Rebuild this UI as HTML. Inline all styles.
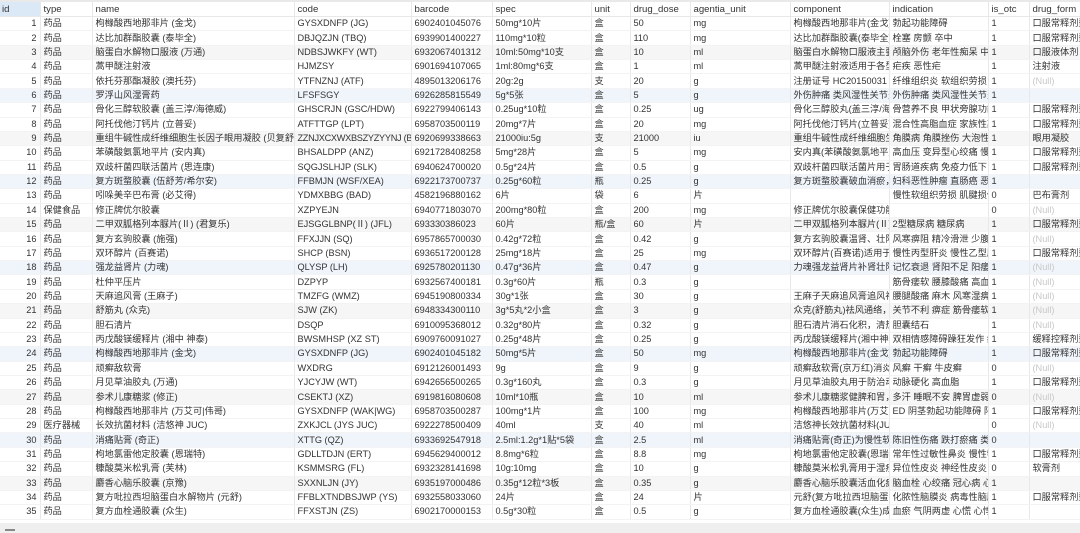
<!DOCTYPE html>
<html><head><meta charset="utf-8">
<style>
html,body{margin:0;padding:0;background:#fff;width:1080px;height:533px;overflow:hidden}
body{font-family:"Liberation Sans","Noto Sans CJK SC",sans-serif;font-size:9.2px;color:#333}
.top{position:absolute;left:0;top:0;width:1080px;height:2px;background:#e9e9e9}
table{position:absolute;left:0;top:2px;border-collapse:collapse;table-layout:fixed;width:1080px}
td,th{height:14.37px;padding:0 0 0 3px;border-right:1px solid #e8e8e8;border-bottom:1px solid #f3f3f3;white-space:nowrap;overflow:hidden;text-align:left;font-weight:normal;line-height:13px;box-sizing:border-box}
th{height:14.5px;background:#fff;border-bottom:1px solid #e8e8e8;font-size:9.6px}
th.sel{background:#dbe8f6}
td:first-child{text-align:right;padding:0 3px 0 0}
tr.b td{background:#f0f5fb}
tr.g td{background:#f6f6f6}
.n{color:#c8c8c8}
.bot{position:absolute;left:0;top:523px;width:1080px;height:10px;background:#efefef}
.ic{position:absolute;left:5px;top:529px;width:10px;height:2px;background:#888}
</style></head><body>
<div class="top"></div>
<table>
<colgroup><col style="width:40px"><col style="width:52px"><col style="width:202px"><col style="width:117px"><col style="width:81px"><col style="width:99px"><col style="width:39px"><col style="width:60px"><col style="width:100px"><col style="width:99px"><col style="width:99px"><col style="width:41px"><col style="width:51px"></colgroup>
<tr><th class="sel" style="text-align:left;padding-left:2px">id</th><th>type</th><th>name</th><th>code</th><th>barcode</th><th>spec</th><th>unit</th><th>drug_dose</th><th>agentia_unit</th><th>component</th><th>indication</th><th>is_otc</th><th>drug_form</th></tr>
<tr><td>1</td><td>药品</td><td>枸橼酸西地那非片 (金戈)</td><td>GYSXDNFP (JG)</td><td>6902401045076</td><td>50mg*10片</td><td>盒</td><td>50</td><td>mg</td><td>枸橼酸西地那非片(金戈)适用</td><td>勃起功能障碍</td><td>1</td><td>口服常释剂型</td></tr>
<tr><td>2</td><td>药品</td><td>达比加群酯胶囊 (泰毕全)</td><td>DBJQZJN (TBQ)</td><td>6939901400227</td><td>110mg*10粒</td><td>盒</td><td>110</td><td>mg</td><td>达比加群酯胶囊(泰毕全)预防</td><td>栓塞 房颤 卒中</td><td>1</td><td>口服常释剂型</td></tr>
<tr class="g"><td>3</td><td>药品</td><td>脑蛋白水解物口服液 (万通)</td><td>NDBSJWKFY (WT)</td><td>6932067401312</td><td>10ml:50mg*10支</td><td>盒</td><td>10</td><td>ml</td><td>脑蛋白水解物口服液主要成分</td><td>颅脑外伤 老年性痴呆 中枢神</td><td>1</td><td>口服液体剂</td></tr>
<tr><td>4</td><td>药品</td><td>蒿甲醚注射液</td><td>HJMZSY</td><td>6901694107065</td><td>1ml:80mg*6支</td><td>盒</td><td>1</td><td>ml</td><td>蒿甲醚注射液适用于各型疟疾</td><td>疟疾 恶性疟</td><td>1</td><td>注射液</td></tr>
<tr><td>5</td><td>药品</td><td>依托芬那酯凝胶 (澳托芬)</td><td>YTFNZNJ (ATF)</td><td>4895013206176</td><td>20g:2g</td><td>支</td><td>20</td><td>g</td><td>注册证号 HC20150031 原注</td><td>纤维组织炎 软组织劳损 运动</td><td>1</td><td class="n">(Null)</td></tr>
<tr class="b"><td>6</td><td>药品</td><td>罗浮山风湿膏药</td><td>LFSFSGY</td><td>6926285815549</td><td>5g*5张</td><td>盒</td><td>5</td><td>g</td><td>外伤肿痛 类风湿性关节炎 风</td><td>外伤肿痛 类风湿性关节炎 风</td><td>1</td><td></td></tr>
<tr><td>7</td><td>药品</td><td>骨化三醇软胶囊 (盖三淳/海德威)</td><td>GHSCRJN (GSC/HDW)</td><td>6922799406143</td><td>0.25ug*10粒</td><td>盒</td><td>0.25</td><td>ug</td><td>骨化三醇胶丸(盖三淳/海德威</td><td>骨营养不良 甲状旁腺功能低</td><td>1</td><td>口服常释剂型</td></tr>
<tr><td>8</td><td>药品</td><td>阿托伐他汀钙片 (立普妥)</td><td>ATFTTGP (LPT)</td><td>6958703500119</td><td>20mg*7片</td><td>盒</td><td>20</td><td>mg</td><td>阿托伐他汀钙片(立普妥)用于</td><td>混合性高脂血症 家族性高胆</td><td>1</td><td>口服常释剂型</td></tr>
<tr class="g"><td>9</td><td>药品</td><td>重组牛碱性成纤维细胞生长因子眼用凝胶 (贝复舒)</td><td style="letter-spacing:-0.3px">ZZNJXCXWXBSZYZYYNJ (BFS)</td><td>6920699338663</td><td>21000iu:5g</td><td>支</td><td>21000</td><td>iu</td><td>重组牛碱性成纤维细胞生长因</td><td>角膜病 角膜挫伤 大泡性角膜</td><td>1</td><td>眼用凝胶</td></tr>
<tr><td>10</td><td>药品</td><td>苯磺酸氨氯地平片 (安内真)</td><td>BHSALDPP (ANZ)</td><td>6921728408258</td><td>5mg*28片</td><td>盒</td><td>5</td><td>mg</td><td>安内真(苯磺酸氨氯地平片)用</td><td>高血压 变异型心绞痛 慢性稳</td><td>1</td><td>口服常释剂型</td></tr>
<tr><td>11</td><td>药品</td><td>双歧杆菌四联活菌片 (思连康)</td><td>SQGJSLHJP (SLK)</td><td>6940624700020</td><td>0.5g*24片</td><td>盒</td><td>0.5</td><td>g</td><td>双歧杆菌四联活菌片用于结肠</td><td>胃肠道疾病 免疫力低下 结核</td><td>1</td><td>口服常释剂型</td></tr>
<tr class="b"><td>12</td><td>药品</td><td>复方斑蝥胶囊 (伍舒芳/希尔安)</td><td>FFBMJN (WSF/XEA)</td><td>6922173700737</td><td>0.25g*60粒</td><td>瓶</td><td>0.25</td><td>g</td><td>复方斑蝥胶囊破血消瘀，攻毒</td><td>妇科恶性肿瘤 直肠癌 恶性淋</td><td>1</td><td></td></tr>
<tr><td>13</td><td>药品</td><td>吲哚美辛巴布膏 (必艾得)</td><td>YDMXBBG (BAD)</td><td>4582196880162</td><td>6片</td><td>袋</td><td>6</td><td>片</td><td></td><td>慢性软组织劳损 肌腱损伤 骨</td><td>0</td><td>巴布膏剂</td></tr>
<tr><td>14</td><td>保健食品</td><td>修正牌优尔胶囊</td><td>XZPYEJN</td><td>6940771803070</td><td>200mg*80粒</td><td>盒</td><td>200</td><td>mg</td><td>修正牌优尔胶囊保健功能：免</td><td></td><td>0</td><td class="n">(Null)</td></tr>
<tr class="g"><td>15</td><td>药品</td><td>二甲双胍格列本脲片(Ⅱ) (君复乐)</td><td>EJSGGLBNP(Ⅱ) (JFL)</td><td>693330386023</td><td>60片</td><td>瓶/盒</td><td>60</td><td>片</td><td>二甲双胍格列本脲片(Ⅱ)(君复</td><td>2型糖尿病 糖尿病</td><td>1</td><td>口服常释剂型</td></tr>
<tr><td>16</td><td>药品</td><td>复方玄驹胶囊 (施强)</td><td>FFXJJN (SQ)</td><td>6957865700030</td><td>0.42g*72粒</td><td>盒</td><td>0.42</td><td>g</td><td>复方玄驹胶囊温肾、壮阳、益</td><td>风寒痹阻 精冷滑泄 少腹阴部</td><td>1</td><td class="n">(Null)</td></tr>
<tr><td>17</td><td>药品</td><td>双环醇片 (百赛诺)</td><td>SHCP (BSN)</td><td>6936517200128</td><td>25mg*18片</td><td>盒</td><td>25</td><td>mg</td><td>双环醇片(百赛诺)适用于治疗</td><td>慢性丙型肝炎 慢性乙型肝炎</td><td>1</td><td>口服常释剂型</td></tr>
<tr class="b"><td>18</td><td>药品</td><td>强龙益肾片 (力魂)</td><td>QLYSP (LH)</td><td>6925780201130</td><td>0.47g*36片</td><td>盒</td><td>0.47</td><td>g</td><td>力魂强龙益肾片补肾壮阳，强</td><td>记忆衰退 肾阳不足 阳痿 腰</td><td>1</td><td class="n">(Null)</td></tr>
<tr><td>19</td><td>药品</td><td>杜仲平压片</td><td>DZPYP</td><td>6932567400181</td><td>0.3g*60片</td><td>瓶</td><td>0.3</td><td>g</td><td></td><td>筋骨痿软 腰膝酸痛 高血压 头</td><td>1</td><td class="n">(Null)</td></tr>
<tr><td>20</td><td>药品</td><td>天麻追风膏 (王麻子)</td><td>TMZFG (WMZ)</td><td>6945190800334</td><td>30g*1张</td><td>盒</td><td>30</td><td>g</td><td>王麻子天麻追风膏追风祛湿，</td><td>腰腿酸痛 麻木 风寒湿痹</td><td>1</td><td class="n">(Null)</td></tr>
<tr class="g"><td>21</td><td>药品</td><td>舒筋丸 (众克)</td><td>SJW (ZK)</td><td>6948334300110</td><td>3g*5丸*2小盒</td><td>盒</td><td>3</td><td>g</td><td>众克(舒筋丸)祛风通络，强筋</td><td>关节不利 痹症 筋骨痿软 瘀血</td><td>1</td><td class="n">(Null)</td></tr>
<tr><td>22</td><td>药品</td><td>胆石清片</td><td>DSQP</td><td>6910095368012</td><td>0.32g*80片</td><td>盒</td><td>0.32</td><td>g</td><td>胆石清片消石化积，清热利胆</td><td>胆囊结石</td><td>1</td><td class="n">(Null)</td></tr>
<tr><td>23</td><td>药品</td><td>丙戊酸镁缓释片 (湘中 神泰)</td><td>BWSMHSP (XZ ST)</td><td>6909760091027</td><td>0.25g*48片</td><td>盒</td><td>0.25</td><td>g</td><td>丙戊酸镁缓释片(湘中神泰)用</td><td>双相情感障碍躁狂发作 继发</td><td>1</td><td>缓释控释剂型</td></tr>
<tr class="b"><td>24</td><td>药品</td><td>枸橼酸西地那非片 (金戈)</td><td>GYSXDNFP (JG)</td><td>6902401045182</td><td>50mg*5片</td><td>盒</td><td>50</td><td>mg</td><td>枸橼酸西地那非片(金戈)为治</td><td>勃起功能障碍</td><td>1</td><td>口服常释剂型</td></tr>
<tr><td>25</td><td>药品</td><td>顽癣敌软膏</td><td>WXDRG</td><td>6912126001493</td><td>9g</td><td>盒</td><td>9</td><td>g</td><td>顽癣敌软膏(京万红)消炎解毒</td><td>风癣 干癣 牛皮癣</td><td>0</td><td class="n">(Null)</td></tr>
<tr><td>26</td><td>药品</td><td>月见草油胶丸 (万通)</td><td>YJCYJW (WT)</td><td>6942656500265</td><td>0.3g*160丸</td><td>盒</td><td>0.3</td><td>g</td><td>月见草油胶丸用于防治动脉粥</td><td>动脉硬化 高血脂</td><td>1</td><td>口服常释剂型</td></tr>
<tr class="g"><td>27</td><td>药品</td><td>参术儿康糖浆 (修正)</td><td>CSEKTJ (XZ)</td><td>6919816080608</td><td>10ml*10瓶</td><td>盒</td><td>10</td><td>ml</td><td>参术儿康糖浆健脾和胃，益气</td><td>多汗 睡眠不安 脾胃虚弱 食欲</td><td>0</td><td class="n">(Null)</td></tr>
<tr><td>28</td><td>药品</td><td>枸橼酸西地那非片 (万艾可|伟哥)</td><td>GYSXDNFP (WAK|WG)</td><td>6958703500287</td><td>100mg*1片</td><td>盒</td><td>100</td><td>mg</td><td>枸橼酸西地那非片(万艾可|伟</td><td>ED 阴茎勃起功能障碍 阳痿</td><td>1</td><td>口服常释剂型</td></tr>
<tr><td>29</td><td>医疗器械</td><td>长效抗菌材料 (洁悠神 JUC)</td><td>ZXKJCL (JYS JUC)</td><td>6922278500409</td><td>40ml</td><td>支</td><td>40</td><td>ml</td><td>洁悠神长效抗菌材料(JUC)为</td><td></td><td>0</td><td class="n">(Null)</td></tr>
<tr class="b"><td>30</td><td>药品</td><td>消痛贴膏 (奇正)</td><td>XTTG (QZ)</td><td>6933692547918</td><td>2.5ml:1.2g*1贴*5袋</td><td>盒</td><td>2.5</td><td>ml</td><td>消痛贴膏(奇正)为慢性软组织</td><td>陈旧性伤痛 跌打瘀痛 类风湿</td><td>0</td><td></td></tr>
<tr><td>31</td><td>药品</td><td>枸地氯雷他定胶囊 (恩瑞特)</td><td>GDLLTDJN (ERT)</td><td>6945629400012</td><td>8.8mg*6粒</td><td>盒</td><td>8.8</td><td>mg</td><td>枸地氯雷他定胶囊(恩瑞特)用</td><td>常年性过敏性鼻炎 慢性特发</td><td>1</td><td>口服常释剂型</td></tr>
<tr><td>32</td><td>药品</td><td>糠酸莫米松乳膏 (芙林)</td><td>KSMMSRG (FL)</td><td>6932328141698</td><td>10g:10mg</td><td>盒</td><td>10</td><td>g</td><td>糠酸莫米松乳膏用于湿疹、神</td><td>异位性皮炎 神经性皮炎 湿疹</td><td>0</td><td>软膏剂</td></tr>
<tr class="g"><td>33</td><td>药品</td><td>麝香心脑乐胶囊 (京豫)</td><td>SXXNLJN (JY)</td><td>6935197000486</td><td>0.35g*12粒*3板</td><td>盒</td><td>0.35</td><td>g</td><td>麝香心脑乐胶囊活血化瘀，开</td><td>脑血栓 心绞痛 冠心病 心肌</td><td>1</td><td></td></tr>
<tr><td>34</td><td>药品</td><td>复方吡拉西坦脑蛋白水解物片 (元舒)</td><td>FFBLXTNDBSJWP (YS)</td><td>6932558033060</td><td>24片</td><td>盒</td><td>24</td><td>片</td><td>元舒(复方吡拉西坦脑蛋白水</td><td>化脓性脑膜炎 病毒性脑膜炎</td><td>1</td><td>口服常释剂型</td></tr>
<tr><td>35</td><td>药品</td><td>复方血栓通胶囊 (众生)</td><td>FFXSTJN (ZS)</td><td>6902170000153</td><td>0.5g*30粒</td><td>盒</td><td>0.5</td><td>g</td><td>复方血栓通胶囊(众生)成份为</td><td>血瘀 气阴两虚 心慌 心悸 眼</td><td>1</td><td></td></tr>
</table>
<div class="bot"></div><div class="ic"></div>
</body></html>
